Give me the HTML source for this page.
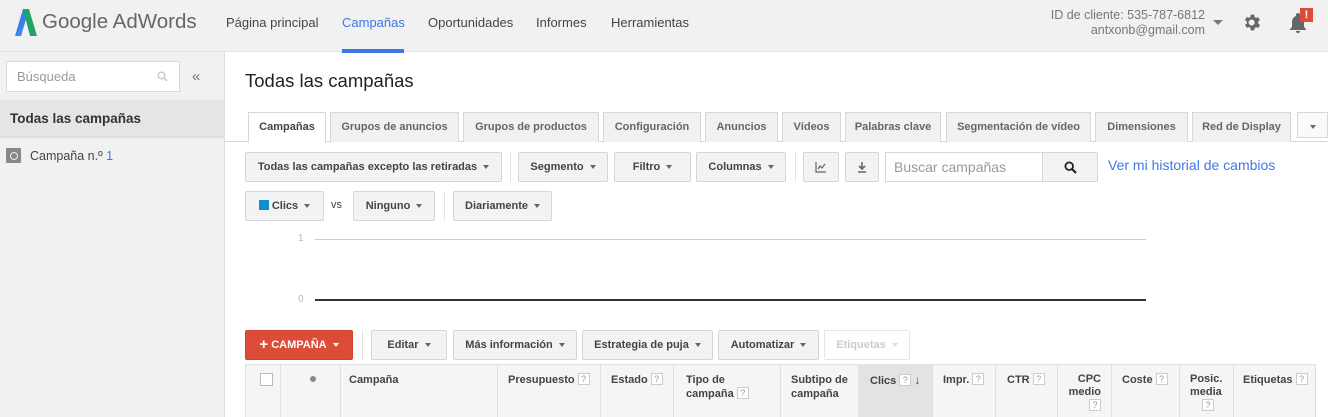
<!DOCTYPE html>
<html><head><meta charset="utf-8"><style>
*{box-sizing:border-box;margin:0;padding:0}
body{width:1328px;height:417px;overflow:hidden;background:#fff;font-family:"Liberation Sans",Arial,sans-serif;position:relative;color:#444}
.a{position:absolute}
.top{left:0;top:0;width:1328px;height:52px;background:#f1f1f1;border-bottom:1px solid #e2e2e2}
.nav{top:15px;font-size:13px;color:#444}
.side{left:0;top:52px;width:225px;height:365px;background:#f1f1f1;border-right:1px solid #ddd}
.tab{top:112px;height:30px;border:1px solid #d8d8d8;border-bottom:none;background:#f1f1f1;font-size:11px;font-weight:bold;color:#666;text-align:center;line-height:29px;white-space:nowrap}
.btn{height:30px;border:1px solid #d6d6d6;background:#f3f3f3;border-radius:2px;font-size:11px;font-weight:bold;color:#444;text-align:center;line-height:28px;white-space:nowrap}
.car{display:inline-block;width:0;height:0;border-left:3.5px solid transparent;border-right:3.5px solid transparent;border-top:4px solid #666;vertical-align:middle;margin-left:6px}
.sep{width:1px;background:#e3e3e3}
.th{top:364px;height:53px;border-left:1px solid #e0e0e0;font-size:11px;font-weight:bold;color:#444;padding:9px 8px;line-height:14px;white-space:nowrap}
.q{display:inline-block;border:1px solid #ccc;color:#999;font-size:9px;width:12px;height:12px;line-height:10px;text-align:center;font-weight:normal;vertical-align:1px;margin-left:3px;background:#fff}
</style></head><body>
<div class="a top"></div>
<svg class="a" style="left:15px;top:9px" width="22" height="27" viewBox="0 0 22 27"><path d="M8 0 L14 0 L6 27 L0 27Z" fill="#3b7ded"/><path d="M8 0 L14 0 L22 27 L15 27Z" fill="#1fa463"/><path d="M0 27 L6 27 L10 13Z" fill="#4285f4"/></svg>
<div class="a" style="left:42px;top:10px;font-size:20.5px;color:#666">Google AdWords</div>
<div class="a nav" style="left:226px">Página principal</div>
<div class="a nav" style="left:342px;color:#3b78e7">Campañas</div>
<div class="a" style="left:342px;top:49px;width:62px;height:4px;background:#3b78e7"></div>
<div class="a nav" style="left:428px">Oportunidades</div>
<div class="a nav" style="left:536px">Informes</div>
<div class="a nav" style="left:611px">Herramientas</div>
<div class="a" style="left:1040px;top:8px;width:165px;text-align:right;font-size:12.5px;color:#777;line-height:15px">ID de cliente: 535-787-6812<br>antxonb@gmail.com</div>
<div class="a car" style="left:1207px;top:20px;border-top-width:5px;border-left-width:5px;border-right-width:5px;border-top-color:#777"></div>
<svg class="a" style="left:1242px;top:12px" width="21" height="21" viewBox="0 0 24 24"><path fill="#666" d="M19.4 13a7.5 7.5 0 000-2l2.1-1.6-2-3.5-2.5 1a7 7 0 00-1.7-1L15 3h-4l-.4 2.7a7 7 0 00-1.7 1l-2.5-1-2 3.5L6.6 11a7.5 7.5 0 000 2l-2.1 1.6 2 3.5 2.5-1a7 7 0 001.7 1L11 21h4l.4-2.7a7 7 0 001.7-1l2.5 1 2-3.5zM12 15.5A3.5 3.5 0 1112 8.5a3.5 3.5 0 010 7z" transform="translate(-1 0)"/></svg>
<svg class="a" style="left:1288px;top:12px" width="20" height="22" viewBox="0 0 20 22"><path fill="#666" d="M10 1a2 2 0 012 2v1a6 6 0 014 6v5l2 2v1H2v-1l2-2v-5a6 6 0 014-6V3a2 2 0 012-2zM8 19h4a2 2 0 01-4 0z"/></svg>
<div class="a" style="left:1300px;top:8px;width:13px;height:14px;background:#dd4b39;color:#fff;font-size:11px;font-weight:bold;text-align:center;line-height:14px">!</div>

<div class="a side"></div>
<div class="a" style="left:6px;top:61px;width:174px;height:31px;background:#fff;border:1px solid #d9d9d9;font-size:13px;color:#999;padding:7px 10px">Búsqueda</div>
<svg class="a" style="left:157px;top:71px" width="11" height="11" viewBox="0 0 11 11"><circle cx="4.5" cy="4.5" r="3.3" fill="none" stroke="#ccc" stroke-width="1.5"/><path d="M7 7l3 3" stroke="#ccc" stroke-width="1.8"/></svg>
<div class="a" style="left:192px;top:68px;font-size:15px;color:#777">«</div>
<div class="a" style="left:0;top:100px;width:224px;height:38px;background:#e5e5e5;border-bottom:2px solid #ddd;font-size:13.5px;font-weight:bold;color:#333;padding:11px 10px">Todas las campañas</div>
<div class="a" style="left:6px;top:148px;width:15px;height:15px;background:#888;border-radius:1px"></div>
<div class="a" style="left:10px;top:152px;width:8px;height:8px;border:1.5px solid #eee;border-radius:50%"></div>
<div class="a" style="left:30px;top:149px;font-size:12.5px;color:#444">Campaña n.º <span style="color:#3b78e7">1</span></div>

<div class="a" style="left:245px;top:70px;font-size:18.5px;color:#222">Todas las campañas</div>
<div class="a" style="left:225px;top:141px;width:1103px;height:1px;background:#d8d8d8"></div>
<div class="a tab" style="left:248px;width:78px;background:#fff;height:31px;color:#444">Campañas</div>
<div class="a tab" style="left:330px;width:129px">Grupos de anuncios</div>
<div class="a tab" style="left:463px;width:136px">Grupos de productos</div>
<div class="a tab" style="left:603px;width:98px">Configuración</div>
<div class="a tab" style="left:705px;width:73px">Anuncios</div>
<div class="a tab" style="left:782px;width:59px">Vídeos</div>
<div class="a tab" style="left:845px;width:96px">Palabras clave</div>
<div class="a tab" style="left:946px;width:145px">Segmentación de vídeo</div>
<div class="a tab" style="left:1095px;width:93px">Dimensiones</div>
<div class="a tab" style="left:1192px;width:99px">Red de Display</div>
<div class="a tab" style="left:1297px;width:31px;top:112px;height:26px;border-bottom:1px solid #d8d8d8;background:#fafafa"><span class="car" style="margin:0"></span></div>

<div class="a btn" style="left:245px;top:152px;width:257px">Todas las campañas excepto las retiradas<span class="car"></span></div>
<div class="a sep" style="left:510px;top:152px;height:30px"></div>
<div class="a btn" style="left:518px;top:152px;width:90px">Segmento<span class="car"></span></div>
<div class="a btn" style="left:614px;top:152px;width:77px">Filtro<span class="car"></span></div>
<div class="a btn" style="left:696px;top:152px;width:90px">Columnas<span class="car"></span></div>
<div class="a sep" style="left:795px;top:152px;height:30px"></div>
<div class="a btn" style="left:803px;top:152px;width:36px"><svg width="12" height="12" viewBox="0 0 12 12" style="vertical-align:middle"><path d="M1 1v10h10M3 8l2-3 2 2 3-4" fill="none" stroke="#666" stroke-width="1.2"/></svg></div>
<div class="a btn" style="left:845px;top:152px;width:34px"><svg width="10" height="12" viewBox="0 0 10 12" style="vertical-align:middle"><path d="M5 1v7M2 5l3 3 3-3M1 11h8" fill="none" stroke="#666" stroke-width="1.6"/></svg></div>
<div class="a" style="left:885px;top:152px;width:158px;height:30px;border:1px solid #d6d6d6;font-size:14px;color:#999;padding:6px 8px">Buscar campañas</div>
<div class="a btn" style="left:1042px;top:152px;width:56px"><svg width="13" height="13" viewBox="0 0 13 13" style="vertical-align:middle"><circle cx="5.2" cy="5.2" r="3.8" fill="none" stroke="#222" stroke-width="1.8"/><path d="M8 8l4 4" stroke="#222" stroke-width="2.2"/></svg></div>
<div class="a" style="left:1108px;top:157px;font-size:14px;color:#3b78e7">Ver mi historial de cambios</div>

<div class="a btn" style="left:245px;top:191px;width:79px"><span style="display:inline-block;width:10px;height:10px;background:#0e8fd0;vertical-align:-1px;margin-right:3px"></span>Clics<span class="car"></span></div>
<div class="a" style="left:331px;top:199px;font-size:11px;color:#444">vs</div>
<div class="a btn" style="left:353px;top:191px;width:82px">Ninguno<span class="car"></span></div>
<div class="a sep" style="left:444px;top:191px;height:30px"></div>
<div class="a btn" style="left:453px;top:191px;width:99px">Diariamente<span class="car"></span></div>

<div class="a" style="left:298px;top:233px;font-size:10px;color:#bbb">1</div>
<div class="a" style="left:315px;top:239px;width:831px;height:1px;background:#ccc"></div>
<div class="a" style="left:298px;top:294px;font-size:10px;color:#bbb">0</div>
<div class="a" style="left:315px;top:299px;width:831px;height:2px;background:#333"></div>

<div class="a btn" style="left:245px;top:330px;width:108px;background:#dd4b39;border-color:#d0412f;color:#fff"><b style="font-size:15px;vertical-align:-1px">+</b> CAMPAÑA<span class="car" style="border-top-color:#fff"></span></div>
<div class="a sep" style="left:362px;top:330px;height:30px"></div>
<div class="a btn" style="left:371px;top:330px;width:76px">Editar<span class="car"></span></div>
<div class="a btn" style="left:453px;top:330px;width:124px">Más información<span class="car"></span></div>
<div class="a btn" style="left:582px;top:330px;width:131px">Estrategia de puja<span class="car"></span></div>
<div class="a btn" style="left:718px;top:330px;width:101px">Automatizar<span class="car"></span></div>
<div class="a btn" style="left:824px;top:330px;width:86px;background:#fff;color:#ccc;border-color:#e6e6e6">Etiquetas<span class="car" style="border-top-color:#ddd"></span></div>

<div class="a" style="left:245px;top:364px;width:1071px;height:53px;background:#f5f5f5;border-top:1px solid #e0e0e0;border-right:1px solid #e0e0e0"></div>
<div class="a th" style="left:245px;width:35px"><div style="width:13px;height:13px;border:1px solid #bbb;background:#fff;margin-left:6px"></div></div>
<div class="a th" style="left:280px;width:60px"><div style="width:6px;height:6px;border-radius:50%;background:#888;margin:3px 0 0 21px"></div></div>
<div class="a th" style="left:340px;width:157px">Campaña</div>
<div class="a th" style="left:497px;width:103px;padding-left:10px">Presupuesto<span class="q">?</span></div>
<div class="a th" style="left:600px;width:73px;padding-left:10px">Estado<span class="q">?</span></div>
<div class="a th" style="left:673px;width:107px;padding-left:12px">Tipo de<br>campaña<span class="q">?</span></div>
<div class="a th" style="left:780px;width:78px;padding-left:10px">Subtipo de<br>campaña</div>
<div class="a th" style="left:858px;width:74px;background:#e3e3e3;padding-left:11px">Clics<span class="q">?</span> <span style="font-size:12px">↓</span></div>
<div class="a th" style="left:932px;width:63px;padding-left:10px">Impr.<span class="q">?</span></div>
<div class="a th" style="left:995px;width:62px;padding-left:11px">CTR<span class="q">?</span></div>
<div class="a th" style="left:1057px;width:54px;text-align:right;padding:9px 10px 0 0;line-height:13px">CPC<br>medio<br><span class="q">?</span></div>
<div class="a th" style="left:1111px;width:68px;padding-left:10px">Coste<span class="q">?</span></div>
<div class="a th" style="left:1179px;width:54px;padding-left:10px;line-height:13px">Posic.<br>media<br><span class="q" style="margin-left:12px">?</span></div>
<div class="a th" style="left:1233px;width:83px;padding-left:9px">Etiquetas<span class="q">?</span></div>
</body></html>
